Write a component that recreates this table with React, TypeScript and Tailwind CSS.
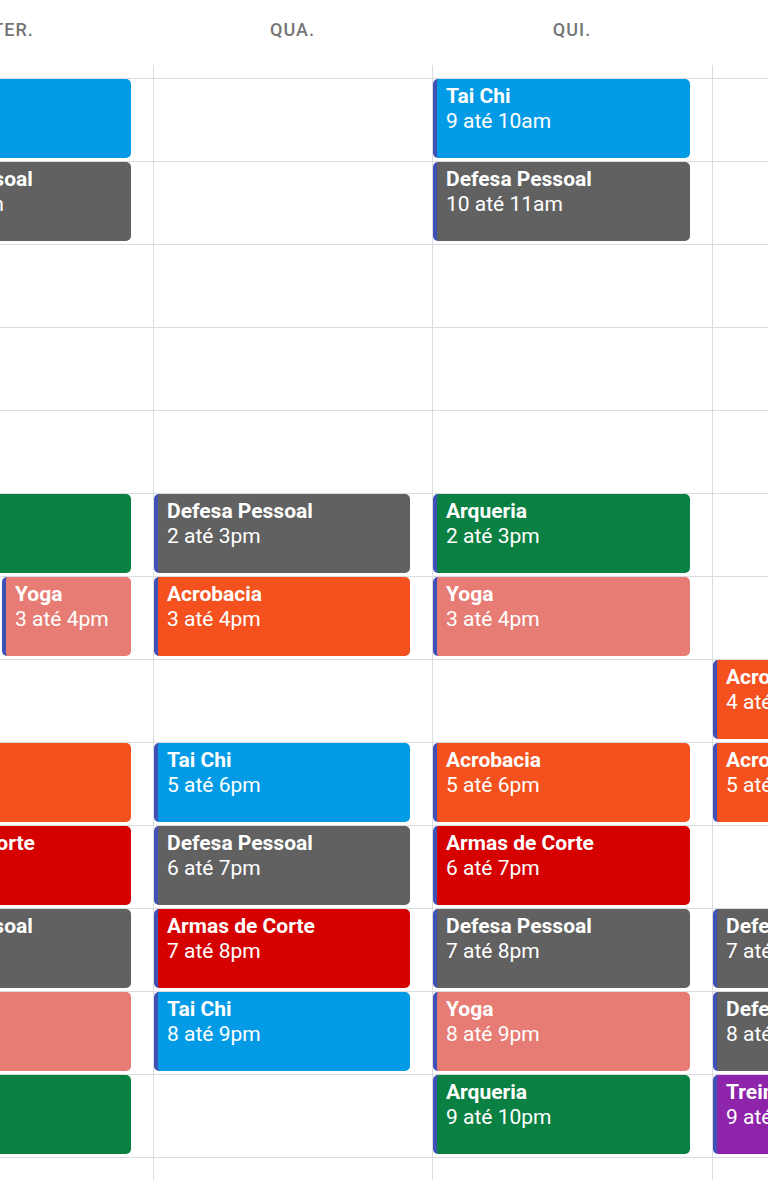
import React from 'react';

type Ev = { title: string; time: string; color: string };
type Slot = Ev | Ev[] | null;

const blue = 'bg-[#039be5]';
const grey = 'bg-[#616161]';
const green = 'bg-[#0b8043]';
const coral = 'bg-[#e67c73]';
const orange = 'bg-[#f4511e]';
const red = 'bg-[#d50000]';
const purple = 'bg-[#8e24aa]';

const ev = (title: string, time: string, color: string): Ev => ({ title, time, color });

const days: { label: string; slots: Slot[] }[] = [
  {
    label: 'TER.',
    slots: [
      ev('Tai Chi', '9 até 10am', blue),
      ev('Defesa Pessoal', '10 até 11am', grey),
      null,
      null,
      null,
      ev('Arqueria', '2 até 3pm', green),
      [ev('Tai Chi', '3 até 4pm', blue), ev('Yoga', '3 até 4pm', coral)],
      null,
      ev('Acrobacia', '5 até 6pm', orange),
      ev('Armas de Corte', '6 até 7pm', red),
      ev('Defesa Pessoal', '7 até 8pm', grey),
      ev('Yoga', '8 até 9pm', coral),
      ev('Arqueria', '9 até 10pm', green),
    ],
  },
  {
    label: 'QUA.',
    slots: [
      null,
      null,
      null,
      null,
      null,
      ev('Defesa Pessoal', '2 até 3pm', grey),
      ev('Acrobacia', '3 até 4pm', orange),
      null,
      ev('Tai Chi', '5 até 6pm', blue),
      ev('Defesa Pessoal', '6 até 7pm', grey),
      ev('Armas de Corte', '7 até 8pm', red),
      ev('Tai Chi', '8 até 9pm', blue),
      null,
    ],
  },
  {
    label: 'QUI.',
    slots: [
      ev('Tai Chi', '9 até 10am', blue),
      ev('Defesa Pessoal', '10 até 11am', grey),
      null,
      null,
      null,
      ev('Arqueria', '2 até 3pm', green),
      ev('Yoga', '3 até 4pm', coral),
      null,
      ev('Acrobacia', '5 até 6pm', orange),
      ev('Armas de Corte', '6 até 7pm', red),
      ev('Defesa Pessoal', '7 até 8pm', grey),
      ev('Yoga', '8 até 9pm', coral),
      ev('Arqueria', '9 até 10pm', green),
    ],
  },
  {
    label: 'SEX.',
    slots: [
      null,
      null,
      null,
      null,
      null,
      null,
      null,
      ev('Acrobacia', '4 até 5pm', orange),
      ev('Acrobacia', '5 até 6pm', orange),
      null,
      ev('Defesa Pessoal', '7 até 8pm', grey),
      ev('Defesa Pessoal', '8 até 9pm', grey),
      ev('Treino Funcional', '9 até 10pm', purple),
    ],
  },
];

const EventCard = ({ e, className = '' }: { e: Ev; className?: string }) => (
  <div
    className={`${e.color} ${className} h-full overflow-hidden whitespace-nowrap rounded-[5px] border-l-4 border-[#3f51b5] pl-[9px] pt-[5px] text-white leading-[25px]`}
  >
    <div className="text-[21px] font-bold">{e.title}</div>
    <div className="text-[21px]">{e.time}</div>
  </div>
);

export default function App() {
  return (
    <div className="w-[768px] h-[1200px] overflow-hidden bg-white font-['Roboto','Liberation_Sans',sans-serif]">
      <div className="ml-[-127px] grid w-max grid-cols-[280px_279px_280px_280px]">
        {days.map((day) => (
          <div key={day.label}>
            {/* day header */}
            <div className="h-[65px] pt-[20px] text-center text-[18px] font-medium leading-[20px] tracking-[1px] text-[#757575]">
              {day.label}
            </div>

            {/* hour rows */}
            <div className="border-l border-[#dadce0] pt-[13px]">
              {day.slots.map((slot, i) => (
                <div key={i} className="h-[83px] border-t border-[#dadce0] pb-[3px] pr-[22px]">
                  {Array.isArray(slot) ? (
                    <div className="flex h-full gap-[3px]">
                      <EventCard e={slot[0]} className="w-[125px] shrink-0" />
                      <EventCard e={slot[1]} className="flex-1" />
                    </div>
                  ) : slot ? (
                    <EventCard e={slot} />
                  ) : null}
                </div>
              ))}
              <div className="h-[23px] border-t border-[#dadce0]" />
            </div>
          </div>
        ))}
      </div>
    </div>
  );
}
